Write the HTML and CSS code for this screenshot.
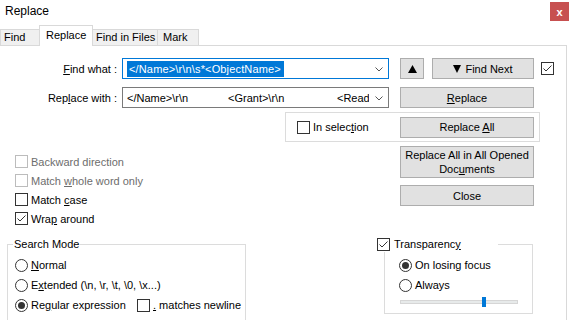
FILE: index.html
```html
<!DOCTYPE html>
<html lang="en">
<head>
    <meta charset="UTF-8">
    <title>Replace</title>
    <link rel="stylesheet" href="styles.css">
</head>
<body>
    <div class="titlebar">
        <span class="title">Replace</span>
        <span class="close">x</span>
    </div>

    <div class="tabs">
        <div class="tab t-find">Find</div>
        <div class="tab t-replace active">Replace</div>
        <div class="tab t-files">Find in Files</div>
        <div class="tab t-mark">Mark</div>
    </div>

    <div class="panel">
        <div class="row row1">
            <label class="lbl"><u>F</u>ind what :</label>
            <div class="combo focus">
                <div class="ctext"><span class="sel">&lt;/Name&gt;\r\n\s*&lt;ObjectName&gt;</span></div>
                <div class="chev"><svg width="8" height="5" viewBox="0 0 8 5"><path d="M0.5 0.5 L4 4 L7.5 0.5" fill="none" stroke="#555" stroke-width="1"/></svg></div>
            </div>
            <div class="btn up"><svg width="9" height="8" viewBox="0 0 9 8"><path d="M4.5 0 L9 8 L0 8 Z" fill="#000"/></svg></div>
            <div class="btn findnext"><svg width="8" height="8" viewBox="0 0 8 8"><path d="M0 0 L8 0 L4 8 Z" fill="#000"/></svg><span>Find Next</span></div>
            <span class="cb on first-cb"><svg width="11" height="11" viewBox="0 0 11 11"><path d="M1.5 5.5 L4 8 L9.5 2.5" fill="none" stroke="#333" stroke-width="1"/></svg></span>
        </div>

        <div class="row row2">
            <label class="lbl">Rep<u>l</u>ace with :</label>
            <div class="combo">
                <div class="ctext"><span class="seg s1">&lt;/Name&gt;\r\n</span><span class="seg s2">&lt;Grant&gt;\r\n</span><span class="seg">&lt;Read&gt;\r\n</span></div>
                <div class="chev"><svg width="8" height="5" viewBox="0 0 8 5"><path d="M0.5 0.5 L4 4 L7.5 0.5" fill="none" stroke="#555" stroke-width="1"/></svg></div>
            </div>
            <div class="btn wide"><span><u>R</u>eplace</span></div>
        </div>

        <div class="selbox">
            <span class="cb"></span>
            <span class="txt">In selec<u>t</u>ion</span>
            <div class="btn wide replace-all"><span>Replace <u>A</u>ll</span></div>
        </div>

        <div class="middle">
            <div class="opts">
                <div class="opt disabled"><span class="cb"></span><span class="txt">Backward direction</span></div>
                <div class="opt disabled"><span class="cb"></span><span class="txt">Match <u>w</u>hole word only</span></div>
                <div class="opt"><span class="cb"></span><span class="txt">Match <u>c</u>ase</span></div>
                <div class="opt"><span class="cb on"><svg width="11" height="11" viewBox="0 0 11 11"><path d="M1.5 5.5 L4 8 L9.5 2.5" fill="none" stroke="#333" stroke-width="1"/></svg></span><span class="txt">Wra<u>p</u> around</span></div>
            </div>
            <div class="actions">
                <div class="btn wide tall"><span>Replace All in All Opened<br>Doc<u>u</u>ments</span></div>
                <div class="btn wide close-btn"><span>Close</span></div>
            </div>
        </div>

        <div class="groups">
            <div class="group search">
                <div class="gtitle">Search Mode</div>
                <div class="opt r"><span class="rb"></span><span class="txt"><u>N</u>ormal</span></div>
                <div class="opt r"><span class="rb"></span><span class="txt">E<u>x</u>tended (\n, \r, \t, \0, \x...)</span></div>
                <div class="opt r">
                    <span class="rb on"></span><span class="txt regex">Re<u>g</u>ular expression</span>
                    <span class="cb"></span><span class="txt"><u>.</u> matches newline</span>
                </div>
            </div>
            <div class="group transp">
                <div class="gtitle tt">
                    <span class="cb on"><svg width="11" height="11" viewBox="0 0 11 11"><path d="M1.5 5.5 L4 8 L9.5 2.5" fill="none" stroke="#333" stroke-width="1"/></svg></span>
                    <span class="txt">Transparenc<u>y</u></span>
                </div>
                <div class="opt r"><span class="rb on"></span><span class="txt">On losing focus</span></div>
                <div class="opt r"><span class="rb"></span><span class="txt">Always</span></div>
                <div class="slider">
                    <div class="track"></div>
                    <div class="thumb"></div>
                </div>
            </div>
        </div>
    </div>
</body>
</html>
```

FILE: styles.css
```css
body {
    margin: 0;
    width: 570px;
    height: 320px;
    overflow: hidden;
    background: #fff;
    font-family: "Liberation Sans", Arial, sans-serif;
    font-size: 11px;
    color: #000;
}
u {
    text-decoration: underline;
    text-underline-offset: 1px;
}
.titlebar {
    height: 22px;
    display: flex;
    justify-content: space-between;
    align-items: flex-start;
}
.title {
    padding: 4px 0 0 5px;
    font-size: 12px;
}
.close {
    width: 19px;
    height: 19px;
    margin: 2px 1px 0 0;
    background: #c75050;
    color: #fff;
    font-weight: bold;
    font-size: 11px;
    display: flex;
    align-items: center;
    justify-content: center;
}
.tabs {
    height: 23px;
    display: flex;
    align-items: flex-end;
}
.tab {
    box-sizing: border-box;
    height: 16px;
    line-height: 15px;
    border: 1px solid #d9d9d9;
    border-bottom: none;
    background: #f0f0f0;
    padding-left: 3px;
    margin-left: -1px;
    white-space: nowrap;
}
.t-find { width: 40px; margin-left: 0; }
.t-replace { width: 54px; }
.t-files { width: 66px; }
.t-mark { width: 42px; padding-left: 5px; }
.tab.active {
    position: relative;
    z-index: 1;
    height: 21px;
    margin-bottom: -1px;
    background: #fff;
    padding: 2px 0 0 6px;
}
.panel {
    width: 566px;
    height: 274px;
    border-top: 1px solid #d9d9d9;
    border-right: 1px solid #d9d9d9;
}
.row {
    display: flex;
    align-items: center;
    height: 21px;
}
.row1 { margin-top: 12px; }
.row2 { margin-top: 8px; }
.lbl {
    width: 117px;
    text-align: right;
    white-space: nowrap;
}
.combo {
    box-sizing: border-box;
    margin-left: 5px;
    width: 267px;
    height: 21px;
    border: 1px solid #7a7a7a;
    display: flex;
    align-items: center;
}
.combo.focus {
    border-color: #0078d7;
}
.ctext {
    flex: 1;
    overflow: hidden;
    white-space: pre;
    padding-left: 4px;
}
.sel {
    display: inline-block;
    background: #0078d7;
    color: #fff;
    line-height: 16px;
    padding: 0 3px 0 2px;
    letter-spacing: 0.15px;
}
.seg { display: inline-block; }
.s1 { width: 101px; }
.s2 { width: 109px; }
.chev {
    width: 19px;
    display: flex;
    justify-content: center;
    padding-top: 1px;
}
.btn {
    box-sizing: border-box;
    height: 21px;
    background: #e1e1e1;
    border: 1px solid #adadad;
    display: flex;
    align-items: center;
    justify-content: center;
    text-align: center;
    white-space: nowrap;
}
.up {
    margin-left: 11px;
    width: 24px;
}
.findnext {
    margin-left: 8px;
    width: 102px;
    gap: 4px;
}
.wide {
    margin-left: 11px;
    width: 134px;
}
.cb {
    box-sizing: border-box;
    width: 13px;
    height: 13px;
    border: 1px solid #333;
    background: #fff;
    display: inline-flex;
    align-items: center;
    justify-content: center;
    flex: none;
}
.first-cb { margin-left: 7px; }
.txt {
    margin-left: 3px;
    white-space: nowrap;
}
.selbox {
    box-sizing: border-box;
    margin: 4px 0 0 285px;
    width: 255px;
    height: 30px;
    border: 1px solid #dcdcdc;
    display: flex;
    align-items: center;
}
.selbox .cb { margin-left: 11px; }
.selbox .replace-all {
    margin-left: auto;
    margin-right: 5px;
}
.middle {
    display: flex;
    height: 102px;
}
.opts {
    box-sizing: border-box;
    width: 400px;
    padding: 10px 0 0 15px;
}
.opt {
    height: 19px;
    display: flex;
    align-items: center;
}
.opt.disabled { color: #6d6d6d; }
.opt.disabled .cb { border-color: #bcbcbc; }
.actions {
    width: 134px;
    padding-top: 4px;
}
.actions .wide { margin-left: 0; }
.tall {
    height: 32px;
    line-height: 14px;
}
.close-btn { margin-top: 7px; }
.groups {
    display: flex;
    padding-left: 7px;
}
.group {
    position: relative;
    box-sizing: border-box;
    border: 1px solid #dcdcdc;
    flex: none;
}
.group .opt { height: 20px; }
.search {
    width: 239px;
    height: 80px;
    padding: 10px 0 0 7px;
}
.transp {
    margin-left: 138px;
    width: 149px;
    height: 70px;
    padding: 10px 0 0 14px;
}
.gtitle {
    position: absolute;
    top: -8px;
    left: 5px;
    background: #fff;
    padding: 0 1px;
    line-height: 15px;
    display: flex;
    align-items: center;
    white-space: nowrap;
}
.tt {
    left: -8px;
    width: 121px;
    padding: 0;
}
.tt .txt { margin-left: 4px; }
.rb {
    box-sizing: border-box;
    width: 13px;
    height: 13px;
    border: 1px solid #333;
    border-radius: 50%;
    display: inline-flex;
    align-items: center;
    justify-content: center;
    flex: none;
}
.rb.on::after {
    content: "";
    width: 7px;
    height: 7px;
    border-radius: 50%;
    background: #333;
}
.regex {
    width: 106px;
    flex: none;
}
.slider {
    position: relative;
    margin-left: 1px;
    width: 118px;
    height: 14px;
    display: flex;
    align-items: center;
}
.track {
    box-sizing: border-box;
    width: 100%;
    height: 4px;
    background: #e7eaea;
    border: 1px solid #d6d6d6;
}
.thumb {
    position: absolute;
    left: 82px;
    top: 2px;
    width: 4px;
    height: 10px;
    background: #0078d7;
}
```
